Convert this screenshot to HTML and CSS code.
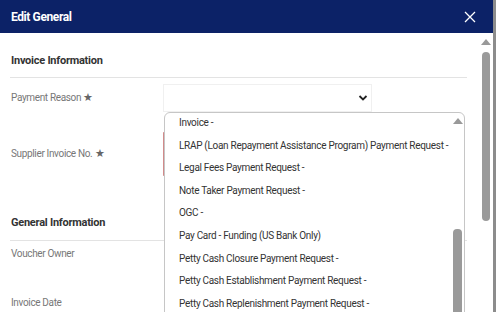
FILE: index.html
```html
<!DOCTYPE html>
<html lang="en">
<head>
    <meta charset="UTF-8">
    <title>Edit General</title>
    <link rel="stylesheet" href="styles.css">
</head>
<body>
    <div class="modal">
        <div class="modal-header">
            <span class="modal-title">Edit General</span>
            <svg class="close-icon" width="12" height="12" viewBox="0 0 12 12">
                <path d="M1 1 L11 11 M11 1 L1 11" stroke="#fff" stroke-width="1.3" fill="none"/>
            </svg>
        </div>
        <div class="modal-body">
            <div class="content">
                <div class="section-title">Invoice Information</div>
                <div class="field-row">
                    <div class="field-label">Payment Reason <span class="req">&#9733;</span></div>
                    <div class="select-box">
                        <svg class="chevron" width="10" height="8" viewBox="0 0 10 8">
                            <path d="M1.5 2 L5 5.5 L8.5 2" stroke="#222" stroke-width="1.8" fill="none"/>
                        </svg>
                    </div>
                </div>
                <div class="field-row tall">
                    <div class="field-label">Supplier Invoice No. <span class="req">&#9733;</span></div>
                    <div class="input-box error"></div>
                </div>

                <div class="section-title second">General Information</div>
                <div class="plain-row">
                    <div class="field-label">Voucher Owner</div>
                </div>
                <div class="plain-row">
                    <div class="field-label">Invoice Date</div>
                </div>

                <!-- open dropdown for payment reason -->
                <div class="dropdown">
                    <ul class="options">
                        <li>Invoice -</li>
                        <li>LRAP (Loan Repayment Assistance Program) Payment Request -</li>
                        <li>Legal Fees Payment Request -</li>
                        <li>Note Taker Payment Request -</li>
                        <li>OGC -</li>
                        <li>Pay Card - Funding (US Bank Only)</li>
                        <li>Petty Cash Closure Payment Request -</li>
                        <li>Petty Cash Establishment Payment Request -</li>
                        <li>Petty Cash Replenishment Payment Request -</li>
                    </ul>
                    <div class="scroll inner">
                        <span class="arrow-up"></span>
                        <span class="thumb"></span>
                    </div>
                </div>
            </div>
            <div class="scroll outer">
                <span class="arrow-up"></span>
                <span class="thumb"></span>
            </div>
        </div>
    </div>
</body>
</html>
```

FILE: styles.css
```css
body {
    margin: 0;
    width: 496px;
    height: 312px;
    overflow: hidden;
    background-color: #8c8c8c;
    font-family: Roboto, 'Liberation Sans', Arial, sans-serif;
    color: #333;
}

.modal {
    width: 493px;
    height: 312px;
    display: flex;
    flex-direction: column;
    background-color: white;
}

.modal-header {
    height: 33px;
    flex-shrink: 0;
    display: flex;
    align-items: center;
    justify-content: space-between;
    padding: 0 17px 0 11px;
    background-color: #0c2267;
}

.modal-title {
    color: white;
    font-size: 12px;
    font-weight: bold;
    letter-spacing: -0.4px;
}

.modal-body {
    flex: 1;
    display: flex;
    overflow: hidden;
}

.content {
    flex: 1;
    position: relative;
    padding: 20px 11px 0 10px;
}

.section-title {
    font-size: 11px;
    font-weight: bold;
    line-height: 16px;
    letter-spacing: -0.25px;
    color: #333;
    padding: 0 0 8px 1px;
    border-bottom: 1px solid #e3e3e3;
}

.section-title.second {
    margin-top: 39px;
    padding-bottom: 9px;
}

.field-row {
    display: flex;
    align-items: center;
    margin-top: 6px;
}

.field-row.tall {
    margin-top: 20px;
}

.field-label {
    width: 152px;
    padding-left: 1px;
    font-size: 10px;
    line-height: 14px;
    letter-spacing: -0.35px;
    color: #777;
}

.req {
    color: #666;
    font-size: 11px;
}

.select-box {
    width: 209px;
    height: 28px;
    border: 1px solid #f0f0f0;
    display: flex;
    align-items: center;
    justify-content: flex-end;
    padding-right: 3px;
    box-sizing: border-box;
}

.input-box {
    width: 209px;
    height: 44px;
    border: 1px solid #eee;
    box-sizing: border-box;
}

.input-box.error {
    border-left: 2px solid #d28a8a;
}

.plain-row {
    margin-top: 6px;
    height: 43px;
}

.dropdown {
    position: absolute;
    left: 164px;
    top: 79px;
    width: 301px;
    height: 230px;
    display: flex;
    background-color: white;
    border: 1px solid #c6c6c6;
    border-radius: 6px 6px 0 0;
    box-sizing: border-box;
    overflow: hidden;
}

.options {
    flex: 1;
    list-style: none;
    margin: -1px 0 0 0;
    padding: 0;
}

.options li {
    height: 22.6px;
    line-height: 22.6px;
    padding-left: 14px;
    font-size: 10px;
    letter-spacing: -0.3px;
    color: #333;
    white-space: nowrap;
}

.scroll {
    display: flex;
    flex-direction: column;
    align-items: center;
}

.scroll.inner {
    width: 13px;
    padding-top: 5px;
}

.scroll.outer {
    width: 15px;
    padding-top: 6px;
}

.arrow-up {
    width: 0;
    height: 0;
    border-left: 5px solid transparent;
    border-right: 5px solid transparent;
    border-bottom: 6px solid #999;
}

.thumb {
    width: 8px;
    border-radius: 4px;
    background-color: #9a9a9a;
}

.scroll.inner .thumb {
    width: 9px;
    margin-top: 105px;
    height: 120px;
}

.scroll.outer .thumb {
    margin-top: 7px;
    height: 169px;
}
```
